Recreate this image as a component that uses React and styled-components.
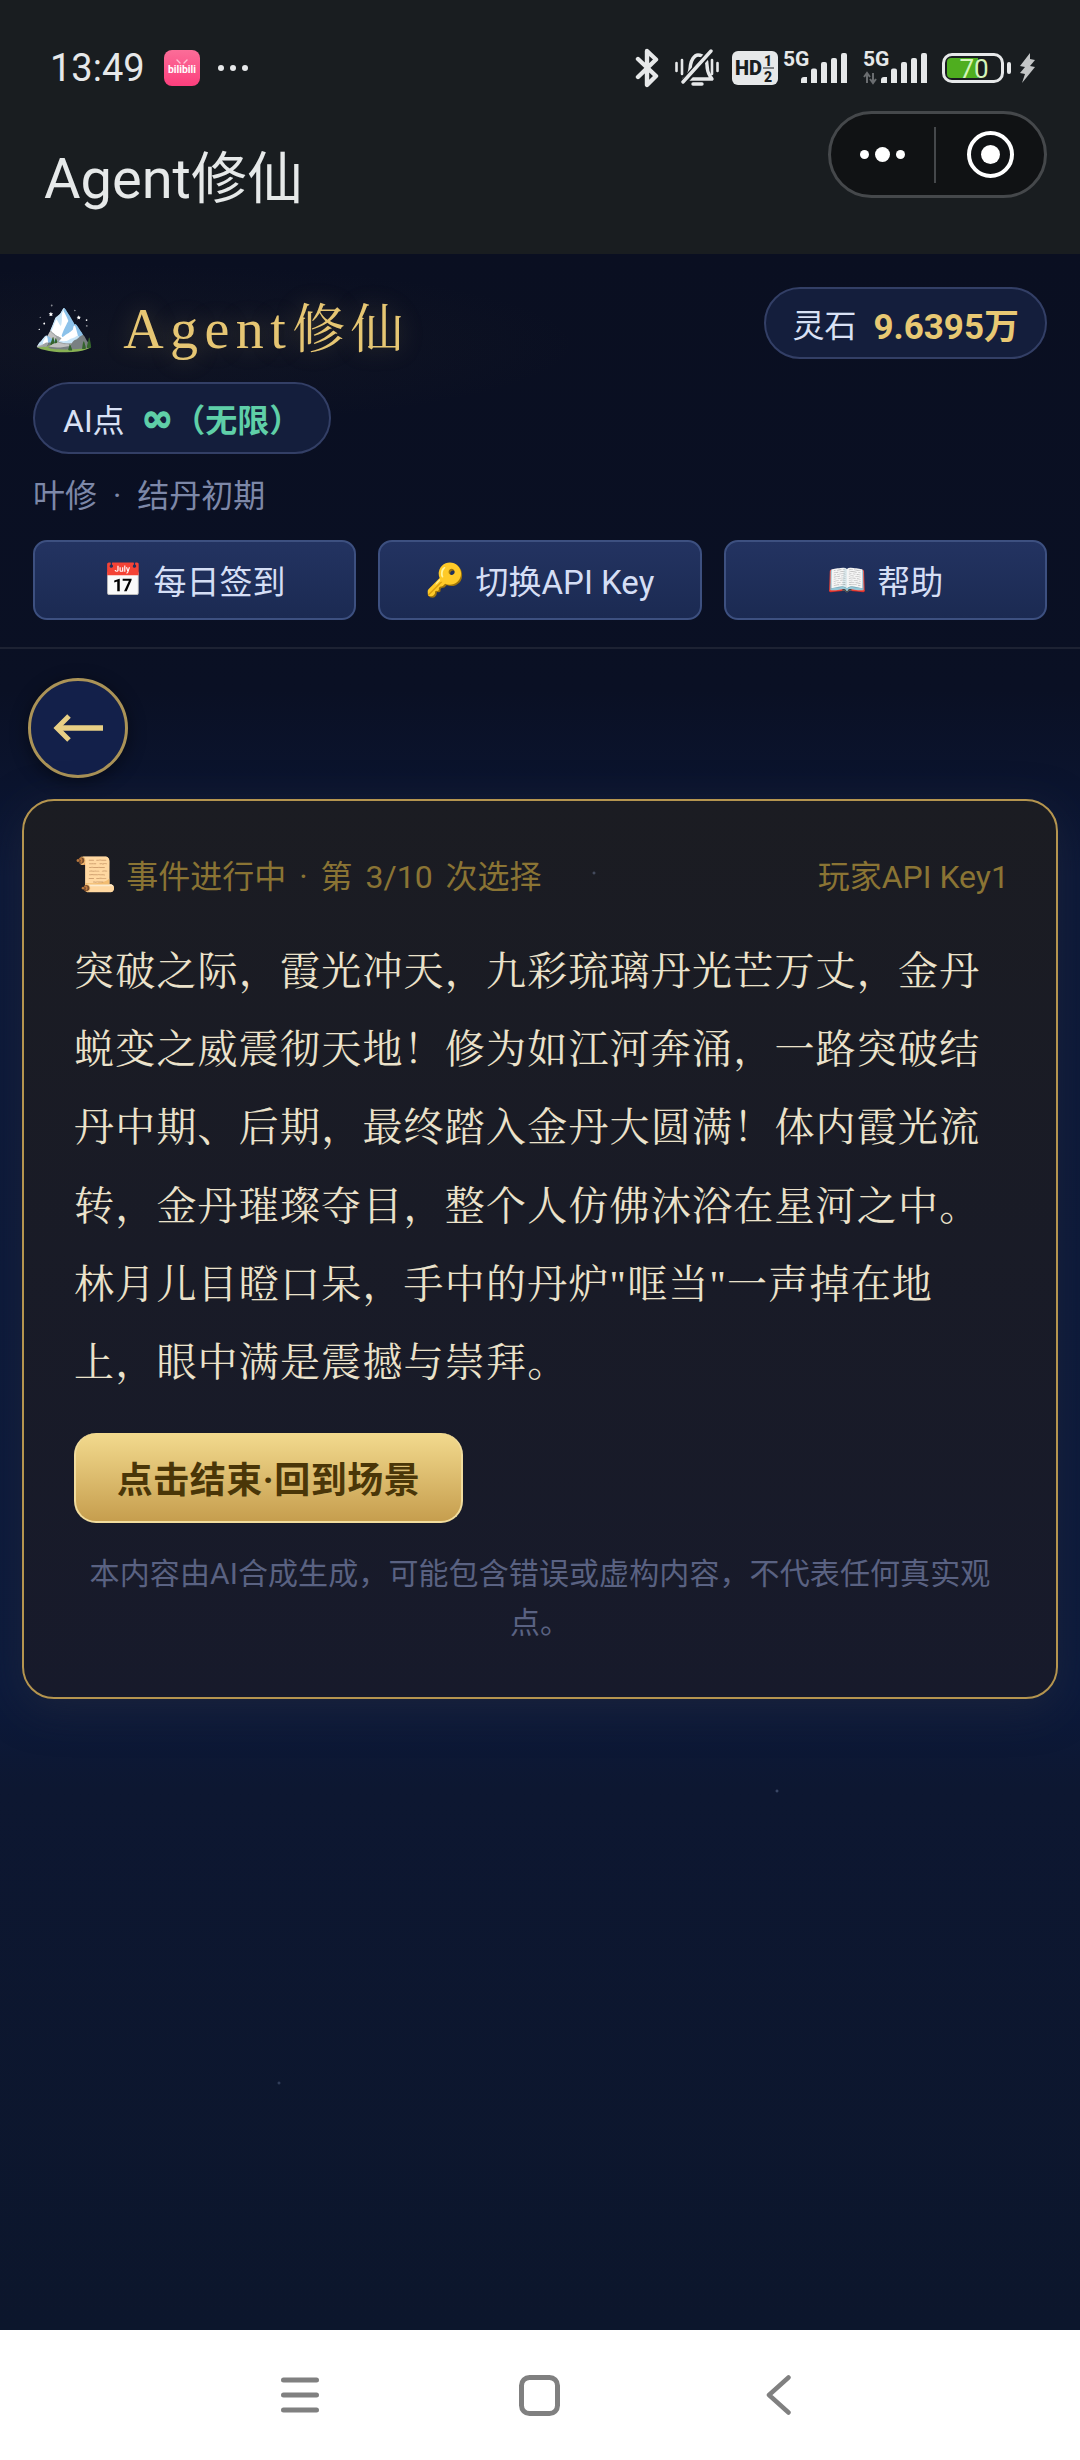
import React from "react";
import styled, { createGlobalStyle } from "styled-components";

const sans = `"Roboto", "Noto Sans CJK SC", sans-serif`;
const serif = `"Liberation Serif", "Noto Serif CJK SC", "Noto Sans CJK SC", serif`;

const GlobalStyle = createGlobalStyle`
  html, body {
    margin: 0;
    padding: 0;
    background: #0a1028;
  }
  * {
    box-sizing: border-box;
  }
`;

const Screen = styled.div`
  width: 1080px;
  height: 2460px;
  display: flex;
  flex-direction: column;
  font-family: ${sans};
`;

const TopArea = styled.div`
  height: 254px;
  flex-shrink: 0;
  background: #191d20;
  display: flex;
  flex-direction: column;
`;

const StatusBar = styled.div`
  height: 108px;
  padding: 28px 44px 0 50px;
  display: flex;
  align-items: center;
  justify-content: space-between;
`;

const StatusLeft = styled.div`
  display: flex;
  align-items: center;
`;

const Time = styled.div`
  font-size: 38px;
  color: #e6e8e9;
  font-weight: 400;
  width: 114px;
`;

const Dots = styled.div`
  display: flex;
  gap: 6px;
  margin-left: 18px;

  & span {
    width: 6px;
    height: 6px;
    border-radius: 50%;
    background: #e6e8e9;
  }
`;

const StatusRight = styled.div`
  display: flex;
  align-items: center;
`;

const StatusIcon = styled.svg`
  display: block;
  margin-right: ${(p) => p.$after || 0}px;
`;

const TitleRow = styled.div`
  flex: 1;
  display: flex;
  align-items: flex-start;
  justify-content: space-between;
  padding: 3px 33px 0 44px;
`;

const AppTitle = styled.div`
  font-size: 56px;
  line-height: 70px;
  color: #e6e9e9;
  margin-top: 33px;
`;

const Capsule = styled.div`
  width: 219px;
  height: 87px;
  border: 3px solid #45484b;
  border-radius: 44px;
  background: #101214;
  display: flex;
  align-items: center;
`;

const CapsuleDots = styled.div`
  flex: 1;
  display: flex;
  align-items: center;
  justify-content: center;
  gap: 6px;

  & span {
    width: 9px;
    height: 9px;
    border-radius: 50%;
    background: #fff;
  }
  & span:nth-child(2) {
    width: 15px;
    height: 15px;
  }
`;

const CapsuleDivider = styled.div`
  width: 2px;
  height: 56px;
  background: #45484b;
`;

const CapsuleTarget = styled.div`
  width: 108px;
  display: flex;
  justify-content: center;
  align-items: center;
`;

const Ring = styled.div`
  width: 47px;
  height: 47px;
  border: 4px solid #fff;
  border-radius: 50%;
  display: flex;
  align-items: center;
  justify-content: center;

  &::after {
    content: "";
    width: 19px;
    height: 19px;
    border-radius: 50%;
    background: #fff;
  }
`;

const Page = styled.div`
  flex: 1;
  min-height: 0;
  background:
    radial-gradient(circle 2px at 777px 1537px, rgba(150, 170, 210, 0.5), transparent),
    radial-gradient(circle 2px at 279px 1829px, rgba(150, 170, 210, 0.4), transparent),
    radial-gradient(ellipse 420px 80px at 160px 90px, rgba(90, 80, 50, 0.08), transparent),
    linear-gradient(180deg, #0a0f21 0%, #0a1024 21%, #0c1838 30%, #0c1a3c 69%, #0d1731 74%, #0c162c 100%);
  display: flex;
  flex-direction: column;
`;

const Header = styled.div`
  height: 395px;
  padding: 33px 33px 0;
  border-bottom: 2px solid #1d2233;
  display: flex;
  flex-direction: column;
`;

const BrandRow = styled.div`
  display: flex;
  justify-content: space-between;
  align-items: flex-start;
  height: 95px;
`;

const Brand = styled.div`
  display: flex;
  align-items: center;
  height: 75px;
`;

const Emoji = styled.span`
  font-family: "Noto Color Emoji", sans-serif;
  font-size: ${(p) => p.$size || 30}px;
  line-height: 1;
  display: inline-flex;
  align-items: center;
`;

const BrandName = styled.div`
  font-family: ${serif};
  font-size: 53px;
  letter-spacing: 5.4px;
  margin-left: 28px;
  color: #e6c673;
  text-shadow: 0 0 24px rgba(230, 198, 115, 0.25);
`;

const BrandLatin = styled.span`
  font-size: 56px;
  letter-spacing: 6.4px;
`;

const Pill = styled.div`
  height: 72px;
  padding: 0 ${(p) => p.$pad || 28}px;
  display: inline-flex;
  align-items: center;
  gap: 17px;
  align-self: flex-start;
  border: 2px solid #333f66;
  border-radius: 36px;
  background: #141e3c;
  font-size: 32px;
  color: #d9e1f5;
`;

const GoldValue = styled.span`
  color: #e8c873;
  font-weight: 700;
  font-size: 35px;
`;

const GreenValue = styled.span`
  color: #5fcfa8;
  font-weight: 700;
  font-size: 32px;
  display: inline-flex;
  align-items: center;
`;

const InfinityMark = styled.span`
  font-family: "DejaVu Sans", sans-serif;
  font-weight: 700;
  font-size: 38px;
  line-height: 1;
  -webkit-text-stroke: 1.2px #5fcfa8;
`;

const RankLine = styled.div`
  margin-top: 20px;
  font-size: 32px;
  line-height: 44px;
  color: #7d88a8;
  word-spacing: 8px;
`;

const ActionRow = styled.div`
  margin-top: 22px;
  display: grid;
  grid-template-columns: repeat(3, 1fr);
  gap: 22px;
`;

const ActionButton = styled.div`
  height: 80px;
  border: 2px solid #3d5080;
  border-radius: 14px;
  background: linear-gradient(180deg, #233361 0%, #1b2a52 100%);
  color: #d5def5;
  font-size: 33px;
  display: flex;
  align-items: center;
  justify-content: center;
  gap: 10px;
`;

const Content = styled.div`
  flex: 1;
  padding: 29px 22px 0;
  display: flex;
  flex-direction: column;
`;

const BackButton = styled.div`
  width: 100px;
  height: 100px;
  margin-left: 6px;
  border: 3px solid #ab9357;
  border-radius: 50%;
  background: #13204a;
  box-shadow: 0 4px 18px rgba(0, 0, 0, 0.45);
  display: flex;
  align-items: center;
  justify-content: center;
`;

const EventCard = styled.div`
  margin-top: 21px;
  height: 900px;
  border: 2px solid #b5954f;
  border-radius: 32px;
  background:
    radial-gradient(circle 2px at 570px 72px, rgba(150, 170, 210, 0.5), transparent),
    linear-gradient(180deg, #1b1c22 0%, #171a2b 100%);
  box-shadow: 0 10px 40px rgba(40, 44, 60, 0.5);
  padding: 48px 50px 0;
`;

const EventHead = styled.div`
  display: flex;
  justify-content: space-between;
  align-items: center;
  height: 50px;
  margin-right: -3px;
  font-size: 32px;
  color: #8a7434;
`;

const EventStatus = styled.div`
  display: flex;
  align-items: center;
  gap: 10px;
  word-spacing: 5px;
`;

const Story = styled.div`
  margin-top: 34px;
  font-family: ${serif};
  font-size: 40px;
  letter-spacing: 1.2px;
  line-height: 78.2px;
  color: #ebe2cb;
`;

const FinishButton = styled.div`
  margin-top: 31px;
  width: 389px;
  height: 90px;
  border: 2px solid #f1dc9d;
  border-top: 0;
  border-radius: 22px;
  background: linear-gradient(180deg, #f2da8e 0%, #c69e4e 100%);
  color: #4a3608;
  font-size: 36px;
  font-weight: 700;
  letter-spacing: 0.5px;
  display: flex;
  align-items: center;
  justify-content: center;
`;

const Disclaimer = styled.div`
  margin-top: 26px;
  font-size: 30px;
  letter-spacing: 0.1px;
  line-height: 49px;
  color: #5a6282;
  text-align: center;
`;

const NavBar = styled.div`
  height: 130px;
  flex-shrink: 0;
  background: #fff;
  display: flex;
  align-items: center;
  justify-content: center;
  gap: 203px;
  padding-right: 8px;
`;

const HomeIcon = styled.svg`
  margin: 0 3px 0 -3px;
`;

function SignalBars({ data, after }) {
  return (
    <StatusIcon $after={after} width="64" height="44" viewBox="0 -4 64 44">
      <text x="0" y="16" fontFamily="Roboto" fontWeight="700" fontSize="21" fill="#e6e8e9">5G</text>
      {data && (
        <path d="M4 23v10M1 27l3-4 3 4M10 33V23M7 29l3 4 3-4" stroke="#6a6d70" strokeWidth="2" fill="none" />
      )}
      <path
        d="M18 30a3 3 0 0 1 3-3h3v6h-6zM28 20.5a2 2 0 0 1 2-2h2a2 2 0 0 1 2 2V33h-6zM38 14a2 2 0 0 1 2-2h2a2 2 0 0 1 2 2v19h-6zM48 10a2 2 0 0 1 2-2h2a2 2 0 0 1 2 2v23h-6zM58 5a2 2 0 0 1 2-2h2a2 2 0 0 1 2 2v28h-6z"
        fill="#e6e8e9"
      />
    </StatusIcon>
  );
}

export default function App() {
  return (
    <Screen>
      <GlobalStyle />
      <TopArea>
        <StatusBar>
          <StatusLeft>
            <Time>13:49</Time>
            <svg width="36" height="36" viewBox="0 0 36 36">
              <defs>
                <linearGradient id="bili" x1="0" y1="0" x2="0" y2="1">
                  <stop offset="0" stopColor="#fb6d98" />
                  <stop offset="1" stopColor="#fc3f7d" />
                </linearGradient>
              </defs>
              <rect width="36" height="36" rx="8" fill="url(#bili)" />
              <path d="M13 10l3 3M23 10l-3 3" stroke="#ffc0d4" strokeWidth="1.4" strokeLinecap="round" />
              <text x="18" y="23" textAnchor="middle" fontFamily="Roboto" fontWeight="700" fontSize="11" textLength="28" lengthAdjust="spacingAndGlyphs" fill="#fff">bilibili</text>
            </svg>
            <Dots>
              <span />
              <span />
              <span />
            </Dots>
          </StatusLeft>
          <StatusRight>
            <StatusIcon $after={16} width="24" height="40" viewBox="0 0 24 40">
              <path d="M3 11l18 17-9 9V3l9 8.5L3 29" stroke="#e6e8e9" strokeWidth="4.4" strokeLinejoin="round" strokeLinecap="round" fill="none" />
            </StatusIcon>
            <StatusIcon $after={13} width="44" height="38" viewBox="0 0 44 38">
              <path d="M12 28c3-3 3-8 3.500-12S19 6 23 6c6 0 9 5 9 10s1 8 3 11l2 3H9zM18 35h9" stroke="#e6e8e9" strokeWidth="3.4" fill="none" strokeLinecap="round" strokeLinejoin="round" />
              <path d="M8 34L36 2" stroke="#191d20" strokeWidth="7" />
              <path d="M8 33L36 2" stroke="#e6e8e9" strokeWidth="3.4" strokeLinecap="round" />
              <path d="M1.500 14v8M7 11v14M37 11v14M42.500 14v8" stroke="#e6e8e9" strokeWidth="2.6" strokeLinecap="round" />
            </StatusIcon>
            <StatusIcon $after={5} width="46" height="34" viewBox="0 0 46 34">
              <rect width="46" height="34" rx="6" fill="#e6e8e9" />
              <text x="3" y="24" fontFamily="Roboto" fontWeight="900" fontSize="20" fill="#191d20">HD</text>
              <text x="32" y="15" fontFamily="Roboto" fontWeight="900" fontSize="14" fill="#191d20">1</text>
              <path d="M31 17h11" stroke="#191d20" strokeWidth="1" />
              <text x="32" y="31" fontFamily="Roboto" fontWeight="900" fontSize="14" fill="#191d20">2</text>
            </StatusIcon>
            <SignalBars after={16} />
            <SignalBars data after={15} />
            <StatusIcon $after={8} width="69" height="30" viewBox="0 0 69 30">
              <rect x="1.500" y="1.500" width="59" height="27" rx="8.500" stroke="#e6e8e9" strokeWidth="3" fill="none" />
              <path d="M9 5h27v20H9a4 4 0 0 1-4-4V9a4 4 0 0 1 4-4z" fill="#4fae1f" />
              <text x="32" y="25" textAnchor="middle" fontFamily="Roboto" fontSize="26" fill="#d4f5b8">70</text>
              <rect x="65" y="9" width="4" height="12" rx="2" fill="#e6e8e9" />
            </StatusIcon>
            <StatusIcon width="17" height="30" viewBox="0 0 17 30">
              <path d="M11 0L1 13l5 1-5 6 5 1-3 9L16 14l-5-1 5-6-5-1z" fill="#c4c6c7" />
            </StatusIcon>
          </StatusRight>
        </StatusBar>
        <TitleRow>
          <AppTitle>Agent修仙</AppTitle>
          <Capsule>
            <CapsuleDots>
              <span />
              <span />
              <span />
            </CapsuleDots>
            <CapsuleDivider />
            <CapsuleTarget>
              <Ring />
            </CapsuleTarget>
          </Capsule>
        </TitleRow>
      </TopArea>

      <Page>
        <Header>
          <BrandRow>
            <Brand>
              <Emoji $size={50}>🏔️</Emoji>
              <BrandName>
                <BrandLatin>Agent</BrandLatin>修仙
              </BrandName>
            </Brand>
            <Pill $pad={26}>
              灵石
              <GoldValue>9.6395万</GoldValue>
            </Pill>
          </BrandRow>
          <Pill>
            AI点
            <GreenValue>
              <InfinityMark>∞</InfinityMark>（无限）
            </GreenValue>
          </Pill>
          <RankLine>叶修 · 结丹初期</RankLine>
          <ActionRow>
            <ActionButton>
              <Emoji $size={32}>📅</Emoji>
              每日签到
            </ActionButton>
            <ActionButton>
              <Emoji $size={32}>🔑</Emoji>
              切换API Key
            </ActionButton>
            <ActionButton>
              <Emoji $size={32}>📖</Emoji>
              帮助
            </ActionButton>
          </ActionRow>
        </Header>

        <Content>
          <BackButton>
            <svg width="50" height="28" viewBox="0 0 50 28">
              <path d="M50 14H5" stroke="#e8cf85" strokeWidth="5.5" fill="none" />
              <path d="M16 2L4 14l12 12" stroke="#e8cf85" strokeWidth="5" fill="none" />
            </svg>
          </BackButton>
          <EventCard>
            <EventHead>
              <EventStatus>
                <Emoji $size={34}>📜</Emoji>
                事件进行中 · 第 3/10 次选择
              </EventStatus>
              <div>玩家API Key1</div>
            </EventHead>
            <Story>
              突破之际，霞光冲天，九彩琉璃丹光芒万丈，金丹蜕变之威震彻天地！修为如江河奔涌，一路突破结丹中期、后期，最终踏入金丹大圆满！体内霞光流转，金丹璀璨夺目，整个人仿佛沐浴在星河之中。林月儿目瞪口呆，手中的丹炉"哐当"一声掉在地上，眼中满是震撼与崇拜。
            </Story>
            <FinishButton>点击结束·回到场景</FinishButton>
            <Disclaimer>本内容由AI合成生成，可能包含错误或虚构内容，不代表任何真实观点。</Disclaimer>
          </EventCard>
        </Content>
      </Page>

      <NavBar>
        <svg width="38" height="36" viewBox="0 0 38 36">
          <path d="M2.500 3h33M2.500 18h33M2.500 33h33" stroke="#808080" strokeWidth="5" strokeLinecap="round" />
        </svg>
        <HomeIcon width="41" height="41" viewBox="0 0 41 41">
          <rect x="2.500" y="2.500" width="36" height="36" rx="8" stroke="#808080" strokeWidth="5" fill="none" />
        </HomeIcon>
        <svg width="25" height="40" viewBox="0 0 25 40">
          <path d="M22.500 2.500L3 20l19.500 17.500" stroke="#808080" strokeWidth="4.500" fill="none" strokeLinecap="round" strokeLinejoin="round" />
        </svg>
      </NavBar>
    </Screen>
  );
}
